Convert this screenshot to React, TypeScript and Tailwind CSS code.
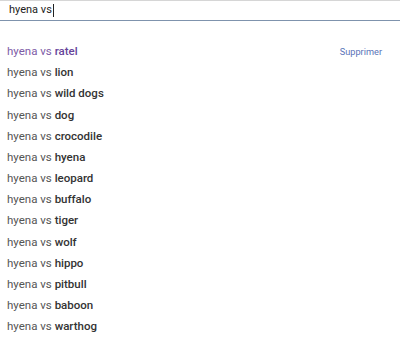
import React from "react";

const items = ["lion","wild dogs","dog","crocodile","hyena","leopard","buffalo","tiger","wolf","hippo","pitbull","baboon","warthog"];

export default function App() {
  return (
    <div className="w-[400px] h-[339px] bg-white overflow-hidden" style={{ fontFamily: "Roboto, Arial, sans-serif" }}>
      <div className="h-[21px] border-t border-[#d6d6d6] border-b border-b-[#7f93ad] flex items-center pl-[9px] text-[11px] text-[#222]">
        <span>hyena vs</span>
        <span className="inline-block w-px h-[13px] bg-[#222] ml-px"></span>
      </div>
      <div className="pt-[20px]">
        <div className="h-[21.2px] flex items-center justify-between pl-[7px] pr-[18px]">
          <span className="text-[11.5px] text-[#7d5ba6]">hyena vs <b className="font-medium text-[#67449a]">ratel</b></span>
          <span className="text-[9.2px] text-[#5a74b8]">Supprimer</span>
        </div>
        {items.map((it) => (
          <div key={it} className="h-[21.2px] flex items-center pl-[7px] text-[11.5px] text-[#555]">
            <span>hyena vs <b className="font-medium text-[#333]">{it}</b></span>
          </div>
        ))}
      </div>
    </div>
  );
}
